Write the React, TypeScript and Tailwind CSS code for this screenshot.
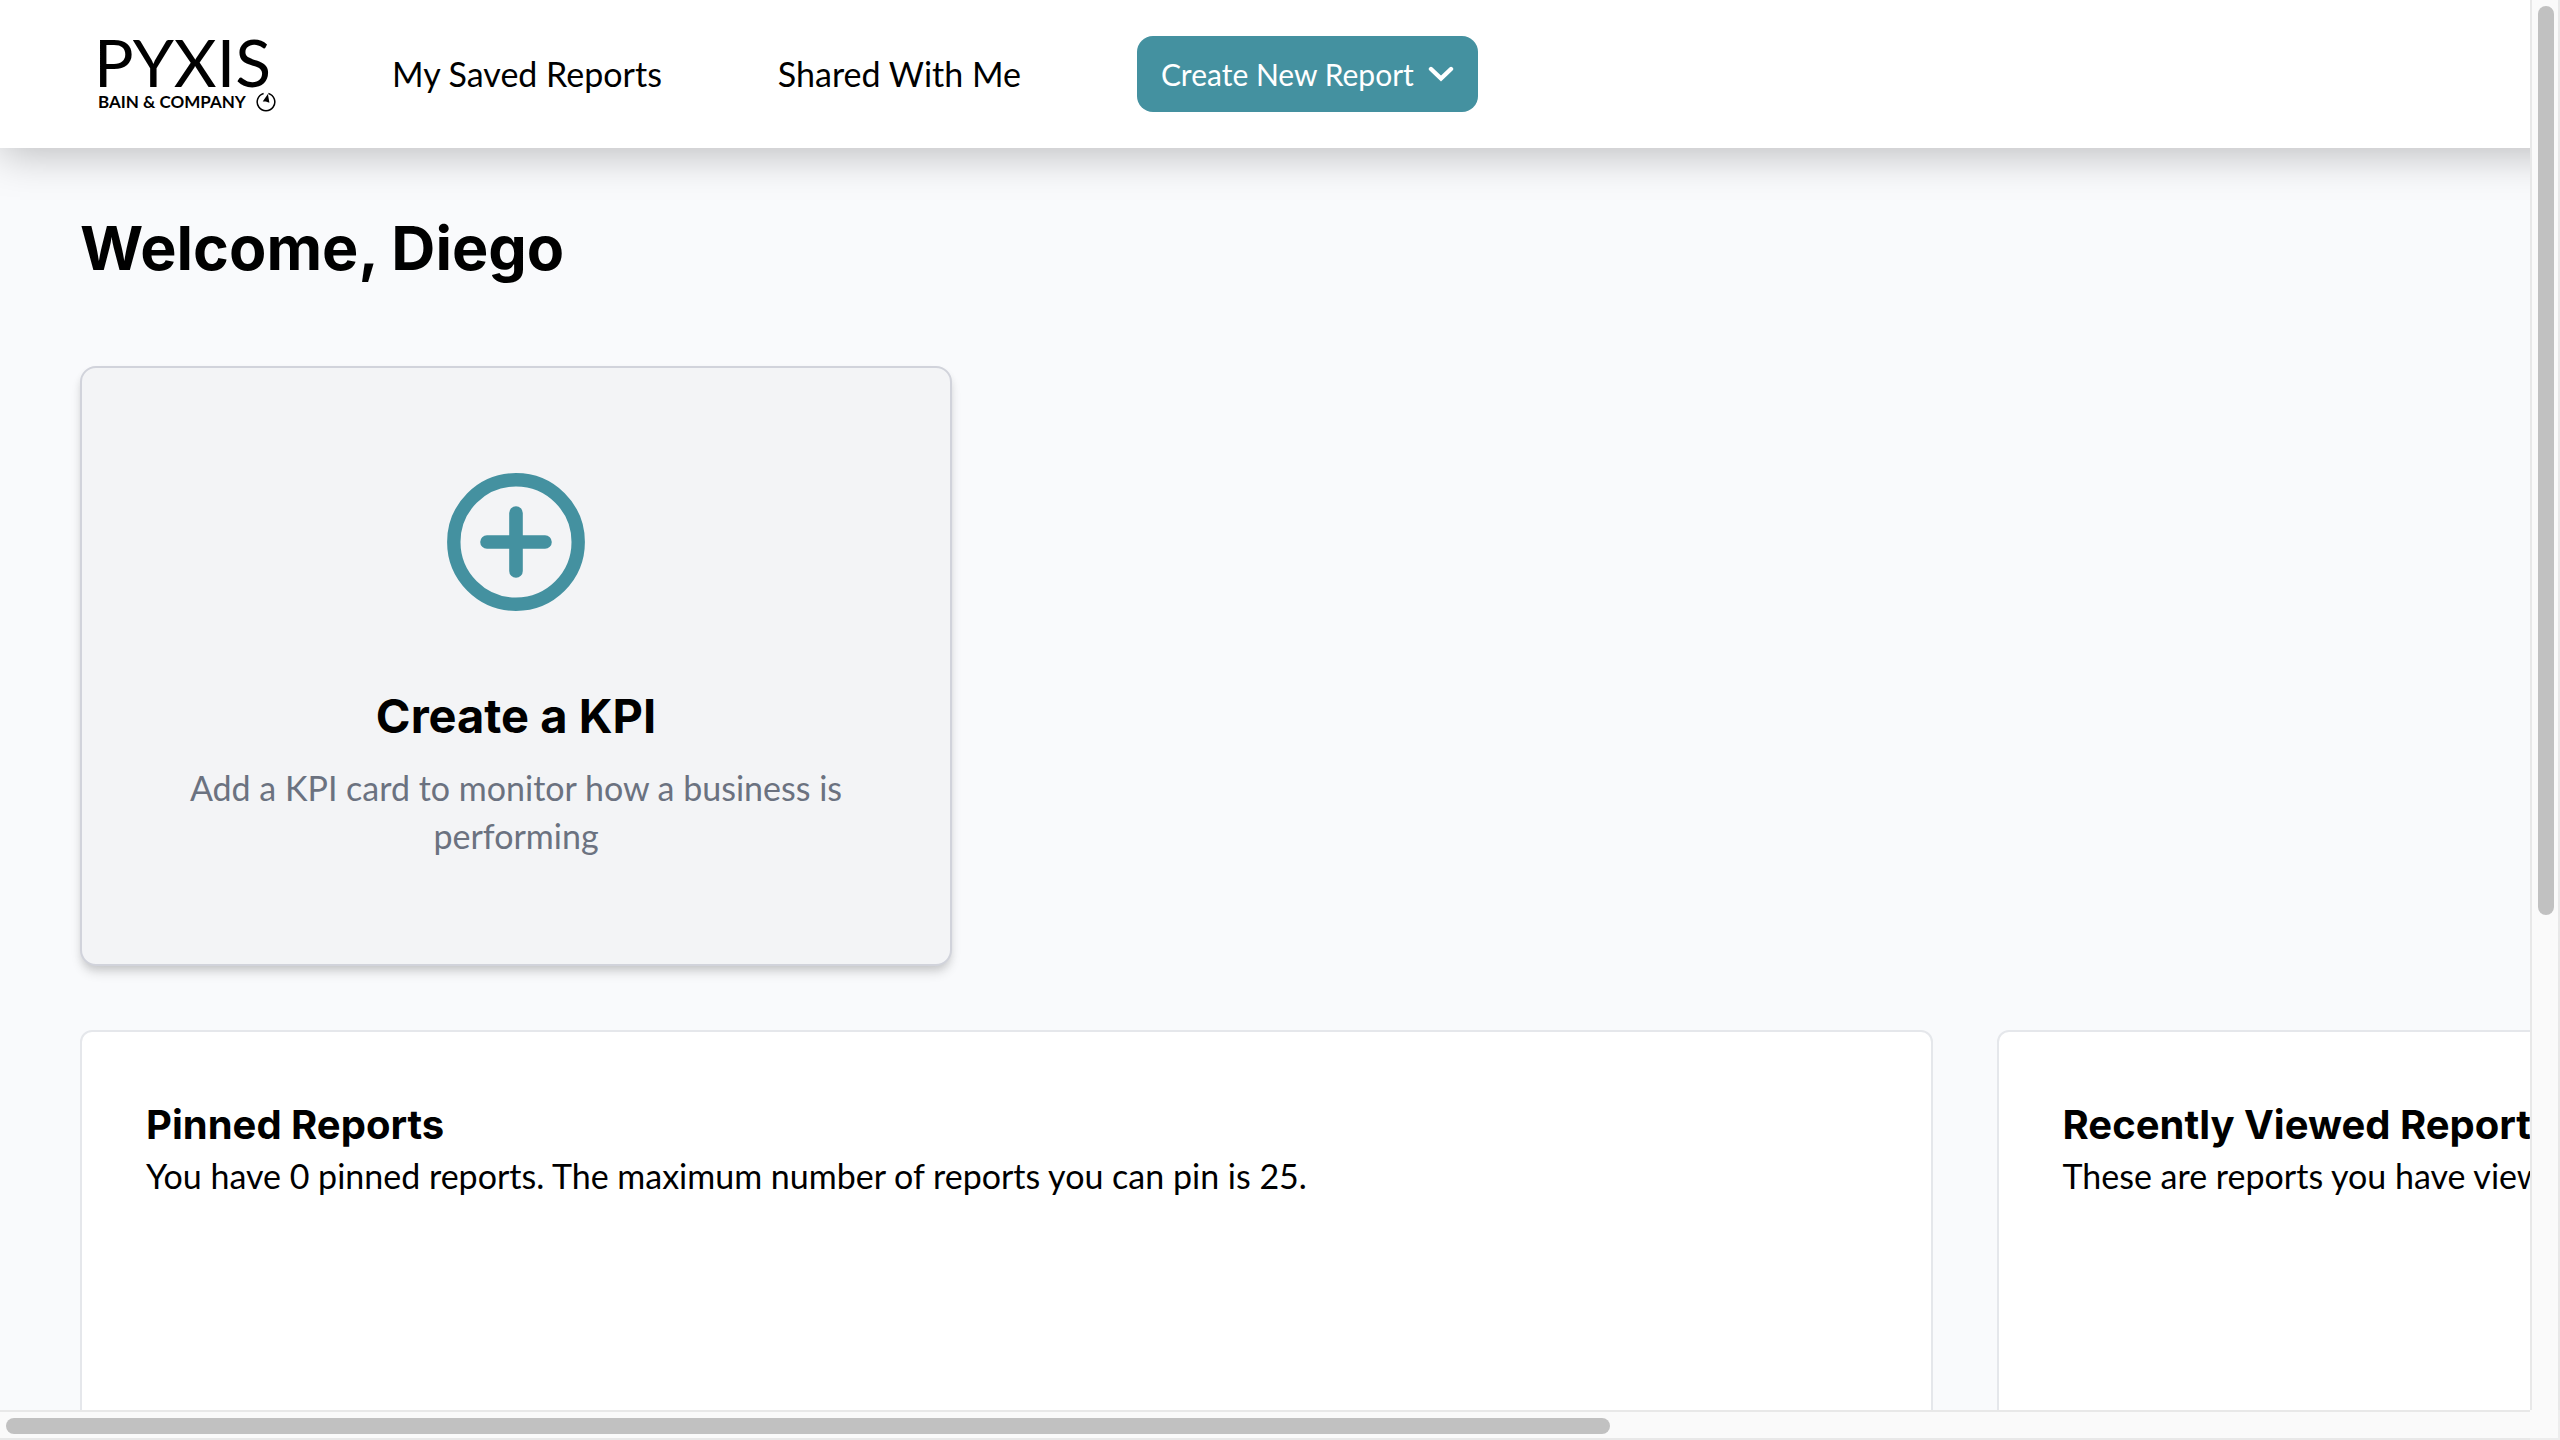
function CompassMark() {
  return (
    <svg viewBox="0 0 20 20" className="size-5 shrink-0" aria-hidden="true">
      <path d="M7.6 1.5A8.8 8.8 0 1 0 12.4 1.5" fill="none" stroke="black" strokeWidth="1.5" />
      <path d="M11.9 2L13.4 10.8L9.8 9.4L6.7 9.6Z" fill="black" />
    </svg>
  );
}

function Logo() {
  return (
    <a href="#home" aria-label="Pyxis, Bain & Company" className="flex w-[178px] shrink-0 flex-col">
      <span className="mb-1 -ml-1 text-[66px] leading-[52px]">PYXIS</span>
      <span className="flex items-center justify-between text-[17px] leading-5 font-bold whitespace-nowrap">
        BAIN &amp; COMPANY
        <CompassMark />
      </span>
    </a>
  );
}

function Header() {
  return (
    <header className="relative flex h-[148px] w-[155.3%] shrink-0 items-center bg-white pl-[98px] shadow-[0_6px_40px_rgba(0,0,0,0.25)]">
      <nav className="flex items-center gap-[116px] text-[34px] leading-12 whitespace-nowrap">
        <Logo />
        <a href="#saved">My Saved Reports</a>
        <a href="#shared">Shared With Me</a>
        <button
          type="button"
          className="flex h-[76px] items-center gap-3.5 rounded-2xl bg-[#4491a0] px-6 text-[30px] text-white"
        >
          Create New Report
          <svg viewBox="0 0 26 16" className="h-4 w-[26px]" fill="none" aria-hidden="true">
            <path d="M3 3L13 12.5L23 3" stroke="white" strokeWidth="4.4" strokeLinecap="round" />
          </svg>
        </button>
      </nav>
    </header>
  );
}

function KpiCard() {
  return (
    <button
      type="button"
      className="flex h-[600px] w-[872px] flex-col items-center rounded-2xl border-2 border-[#d1d3db] bg-[#f3f4f6] px-20 pt-[104px] shadow-[0_8px_12px_-2px_rgba(0,0,0,0.14),0_4px_8px_-2px_rgba(0,0,0,0.1)]"
    >
      <svg viewBox="0 0 140 140" className="size-[140px]" fill="none" stroke="#4491a0" aria-hidden="true">
        <circle cx="70" cy="70" r="62.2" strokeWidth="13.4" />
        <path d="M70 41V99M41 70H99" strokeWidth="13.6" strokeLinecap="round" />
      </svg>
      <span className="mt-[70px] font-[Inter,sans-serif] text-[47px] leading-[68px] font-bold">Create a KPI</span>
      <span className="mt-3.5 text-[34px] leading-12 text-[#6b7280]">
        Add a KPI card to monitor how a business is performing
      </span>
    </button>
  );
}

function Panel({ title, text }: { title: string; text: string }) {
  return (
    <section className="min-h-[560px] rounded-xl border-2 border-[#e5e7eb] bg-white px-16 pt-[66px] whitespace-nowrap">
      <h2 className="font-[Inter,sans-serif] text-[40px] leading-[54px] font-bold">{title}</h2>
      <p className="text-[34px] leading-12">{text}</p>
    </section>
  );
}

export default function App() {
  return (
    <div className="grid h-screen grid-cols-[1fr_30px] grid-rows-[minmax(0,1fr)_30px] overflow-hidden bg-[#fafafa] font-[Lato,sans-serif] text-black">
      <div className="flex min-h-0 min-w-0 flex-col overflow-hidden bg-[#f9fafc]">
        <Header />
        <main className="flex w-[155.3%] shrink-0 flex-col px-20 pt-[60px]">
          <h1 className="font-[Inter,sans-serif] text-[61px] leading-20 font-bold">Welcome, Diego</h1>
          <div className="mt-[78px]">
            <KpiCard />
          </div>
          <div className="mt-16 grid grid-cols-2 gap-16">
            <Panel
              title="Pinned Reports"
              text="You have 0 pinned reports. The maximum number of reports you can pin is 25."
            />
            <Panel title="Recently Viewed Reports" text="These are reports you have viewed recently." />
          </div>
        </main>
      </div>
      <div className="flex justify-end border-x-2 border-[#e8e8e8] py-1.5 pr-1">
        <div className="h-[65%] w-4 rounded-full bg-[#c1c1c1]" />
      </div>
      <div className="flex items-end border-y-2 border-[#e8e8e8] px-1.5 pb-1">
        <div className="h-4 w-[63.7%] rounded-full bg-[#c1c1c1]" />
      </div>
      <div className="border-r-2 border-b-2 border-[#ededed]" />
    </div>
  );
}
